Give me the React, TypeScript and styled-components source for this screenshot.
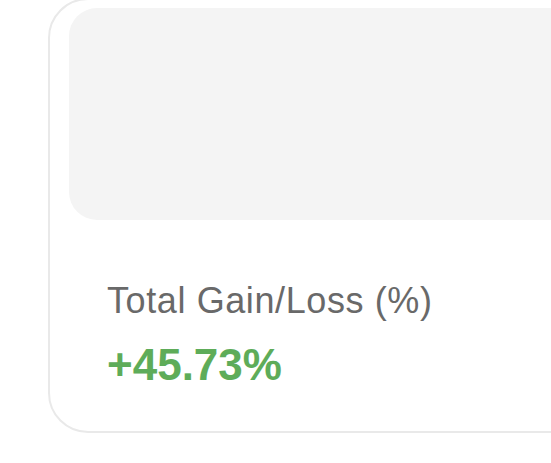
import styled, { createGlobalStyle } from "styled-components";

const GlobalStyle = createGlobalStyle`
  html, body {
    margin: 0;
    padding: 0;
    background: #ffffff;
    overflow: hidden;
  }
  body {
    font-family: "Liberation Sans", Arial, Helvetica, sans-serif;
  }
`;

const Page = styled.div`
  width: 551px;
  height: 463px;
  overflow: hidden;
`;

const Card = styled.section`
  box-sizing: border-box;
  width: 560px;
  margin: -2px 0 0 48px;
  padding: 8px 0 40px 19px;
  border: 2px solid #e9e9e9;
  border-radius: 40px;
  background: #ffffff;
`;

const ChartArea = styled.div`
  height: 212px;
  border-radius: 28px;
  background: #f4f4f4;
`;

const Stat = styled.div`
  display: flex;
  flex-direction: column;
  gap: 19px;
  padding: 60px 0 0 38px;
`;

const Label = styled.div`
  font-size: 36px;
  line-height: 1.15;
  letter-spacing: 0.6px;
  color: #696969;
`;

const Value = styled.div<{ $positive: boolean }>`
  font-size: 44px;
  font-weight: 700;
  line-height: 1.15;
  color: ${(p) => (p.$positive ? "#5eac59" : "#d9534f")};
`;

const change = 45.73;

export default function App() {
  return (
    <Page>
      <GlobalStyle />
      <Card>
        <ChartArea />
        <Stat>
          <Label>Total Gain/Loss (%)</Label>
          <Value $positive={change >= 0}>
            {change >= 0 ? "+" : ""}
            {change.toFixed(2)}%
          </Value>
        </Stat>
      </Card>
    </Page>
  );
}
